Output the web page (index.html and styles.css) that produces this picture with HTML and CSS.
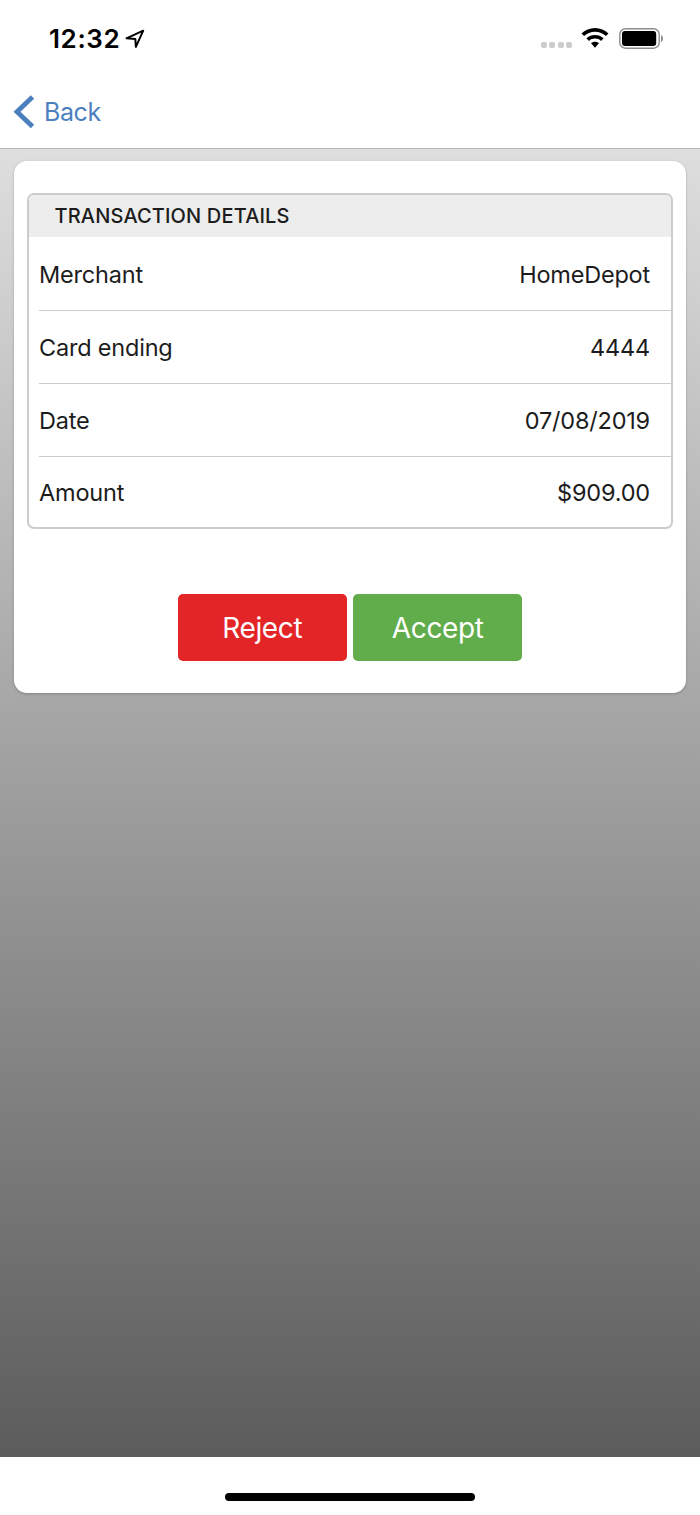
FILE: index.html
```html
<!DOCTYPE html>
<html lang="en">
<head>
<meta charset="utf-8">
<title>Transaction Details</title>
<link rel="stylesheet" href="styles.css">
</head>
<body>
<div class="screen">
  <header class="header">
    <div class="status">
      <span class="time">12:32</span>
      <svg class="location" width="20" height="20" viewBox="0 0 20 20"><path d="M1.500 9.300 18.200 1.700 10.900 17.900 10.300 9.900z" fill="none" stroke="#000" stroke-width="2" stroke-linejoin="round"/></svg>
      <span class="signal"><i></i><i></i><i></i><i></i></span>
      <svg class="wifi" width="28" height="21" viewBox="0 0 28 21"><path d="M14 0C8.700 0 3.900 2.100.5 5.400L3.100 8.100C5.900 5.400 9.700 3.800 14 3.800S22.100 5.400 24.900 8.100L27.500 5.400C24.100 2.100 19.300 0 14 0zM14 6.900C10.700 6.900 7.700 8.100 5.400 10.300L8 12.900C9.600 11.400 11.700 10.600 14 10.600S18.400 11.400 20 12.900L22.600 10.300C20.300 8.100 17.300 6.900 14 6.900zM14 13.700C12.500 13.700 11.200 14.200 10.100 15.200L14 19.800 17.900 15.200C16.800 14.200 15.500 13.700 14 13.700z"/></svg>
      <svg class="battery" width="45" height="22" viewBox="0 0 45 22"><rect x=".8" y=".8" width="39.400" height="19.400" rx="5.500" fill="none" stroke="#8d8d8d" stroke-width="1.400"/><rect x="3" y="3" width="34.200" height="15" rx="3" fill="#000"/><path d="M42 7c2.700 1 2.700 6 0 7z" fill="#8d8d8d"/></svg>
    </div>
    <a class="back">
      <svg width="22" height="34" viewBox="0 0 22 34"><path d="M19.500 2 4 16.800 19.500 31.600" fill="none" stroke="#4c7fbd" stroke-width="4.800"/></svg>
      <span>Back</span>
    </a>
  </header>
  <main class="content">
    <section class="card">
      <div class="details">
        <h1 class="title">TRANSACTION DETAILS</h1>
        <div class="row first"><span>Merchant</span><span>HomeDepot</span></div>
        <div class="row"><span>Card ending</span><span>4444</span></div>
        <div class="row"><span>Date</span><span>07/08/2019</span></div>
        <div class="row last"><span>Amount</span><span>$909.00</span></div>
      </div>
      <div class="actions">
        <button class="button reject">Reject</button>
        <button class="button accept">Accept</button>
      </div>
    </section>
  </main>
  <footer class="footer"><div class="home"></div></footer>
</div>
</body>
</html>
```
FILE: styles.css
```css
* { box-sizing: border-box; }
body { margin: 0; font-family: Inter, Roboto, sans-serif; color: #1c1c1c; background: #fff; }
.screen { width: 700px; height: 1515px; display: flex; flex-direction: column; overflow: hidden; }
.header { height: 149px; border-bottom: 1px solid #b5b5b5; flex: none; }
.status { height: 76px; padding: 1px 36px 0 49px; display: flex; align-items: center; }
.time { padding-top: 1px; font-size: 26px; font-weight: 600; letter-spacing: .6px; color: #000; line-height: 30px; }
.location { margin-left: 5px; }
.signal { display: flex; gap: 2.500px; margin: 12px 9px 0 auto; }
.signal i { width: 6px; height: 6px; border-radius: 2px; background: #ccc; }
.wifi { margin-right: 10px; }
.back { display: flex; align-items: center; height: 72px; padding-left: 13px; gap: 9px; color: #4c7fbd; font-size: 25px; letter-spacing: -.4px; }
.content { flex: none; height: 1308px; padding: 12px 14px; background: linear-gradient(#dedede, #5c5c5c); }
.card { height: 532px; padding: 32px 13px 0; background: #fff; border-radius: 13px; box-shadow: 0 1px 3px rgba(0,0,0,.22); }
.details { height: 336px; border: 2px solid #ccc; border-radius: 7px; overflow: hidden; }
.title { height: 42px; margin: 0; padding-left: 25.500px; background: #ededed; font-size: 20px; font-weight: 500; letter-spacing: .15px; line-height: 43px; }
.row { display: flex; justify-content: space-between; align-items: center; height: 73px; margin-left: 10px; padding: 0 21px 0 0; border-bottom: 1px solid #ccc; font-size: 23.500px; letter-spacing: -.2px; }
.first { height: 74px; padding-top: 2px; }
.last { height: 70px; border: 0; }
.actions { display: flex; justify-content: center; gap: 6.500px; margin-top: 65px; }
.button { width: 169px; height: 67px; padding: 0; border: 0; border-radius: 5px; color: #fff; font: 28px Inter, Roboto, sans-serif; letter-spacing: -.35px; }
.reject { background: #e42527; }
.accept { background: #61ad4b; }
.footer { flex: 1; display: flex; justify-content: center; padding-top: 36px; background: #fff; }
.home { width: 250px; height: 8px; border-radius: 4px; background: #000; }
```
